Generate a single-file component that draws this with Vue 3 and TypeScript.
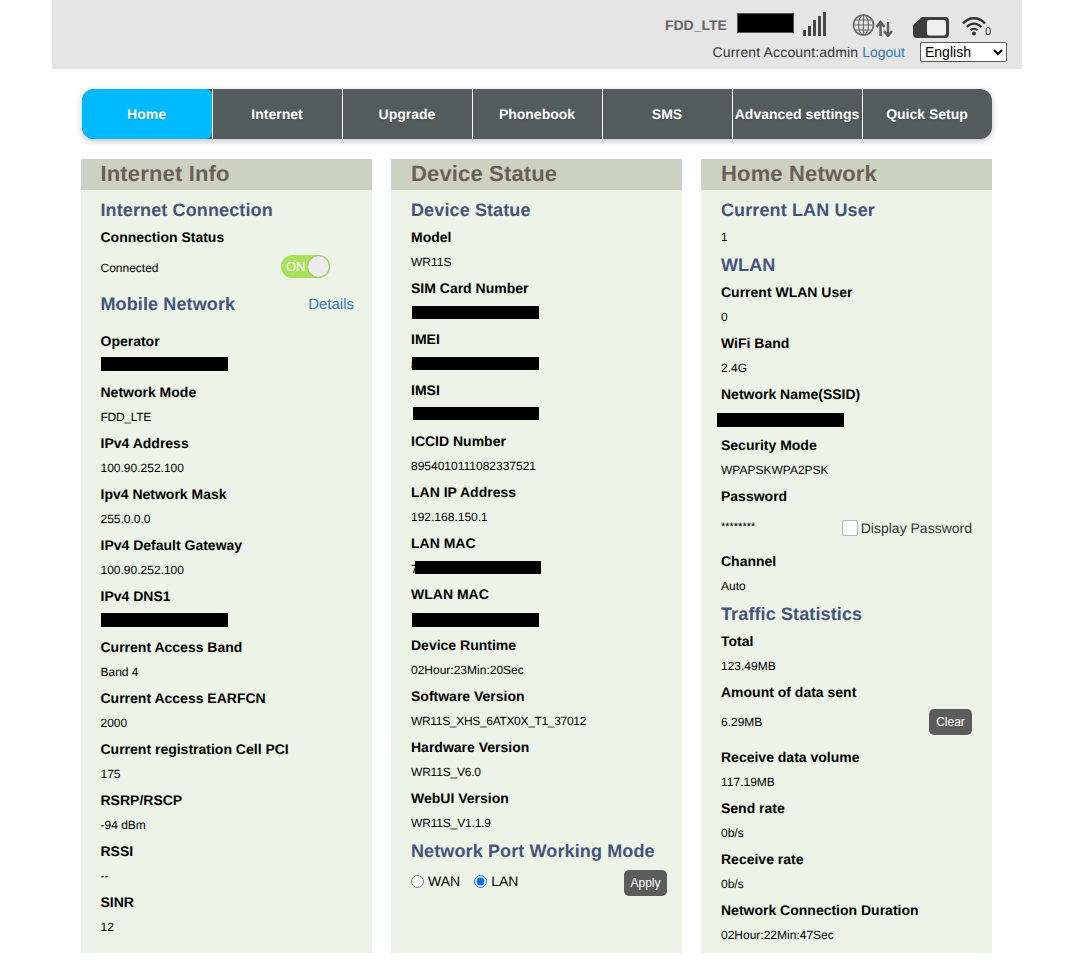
<script setup lang="ts">
type Row = {
  kind: 'h' | 'l' | 'v' | 'r'
  text?: string
  cls?: string
  w?: number
  dx?: number
  top?: number
  ht?: number
  lead?: string
}
const l = (text: string): Row => ({ kind: 'l', text })
const v = (text: string): Row => ({ kind: 'v', text })
const h = (text: string, cls = ''): Row => ({ kind: 'h', text, cls })
const r = (w: number, dx: number, top: number, ht: number, lead = ''): Row => ({ kind: 'r', w, dx, top, ht, lead })

const barStyle = (x: Row) => ({
  width: x.w + 'px',
  height: x.ht + 'px',
  marginLeft: x.dx + 'px',
  marginTop: x.top + 'px'
})

// The reference's underscore is narrower than this font's: spread the difference over the value.
const valueStyle = (x: Row) => {
  const text = x.text ?? ''
  const count = text.split('_').length - 1
  return count ? { letterSpacing: (-2 * count) / text.length + 'px' } : undefined
}

const nav = ['Home', 'Internet', 'Upgrade', 'Phonebook', 'SMS', 'Advanced settings', 'Quick Setup']

const col1b: Row[] = [
  l('Operator'), r(127, 0, 3, 14),
  l('Network Mode'), v('FDD_LTE'),
  l('IPv4 Address'), v('100.90.252.100'),
  l('Ipv4 Network Mask'), v('255.0.0.0'),
  l('IPv4 Default Gateway'), v('100.90.252.100'),
  l('IPv4 DNS1'), r(127, 0, 4, 14),
  l('Current Access Band'), v('Band 4'),
  l('Current Access EARFCN'), v('2000'),
  l('Current registration Cell PCI'), v('175'),
  l('RSRP/RSCP'), v('-94 dBm'),
  l('RSSI'), v('--'),
  l('SINR'), v('12')
]
const col2: Row[] = [
  h('Device Statue', 'first'),
  l('Model'), v('WR11S'),
  l('SIM Card Number'), r(127, 1, 5, 13),
  l('IMEI'), r(127, 1, 5, 13, '8'),
  l('IMSI'), r(126, 2, 4, 13),
  l('ICCID Number'), v('8954010111082337521'),
  l('LAN IP Address'), v('192.168.150.1'),
  l('LAN MAC'), r(126, 4, 5, 13, '7'),
  l('WLAN MAC'), r(127, 1, 6, 14),
  l('Device Runtime'), v('02Hour:23Min:20Sec'),
  l('Software Version'), v('WR11S_XHS_6ATX0X_T1_37012'),
  l('Hardware Version'), v('WR11S_V6.0'),
  l('WebUI Version'), v('WR11S_V1.1.9')
]
const col3a: Row[] = [
  h('Current LAN User', 'first'), v('1'),
  h('WLAN', 'mid'),
  l('Current WLAN User'), v('0'),
  l('WiFi Band'), v('2.4G'),
  l('Network Name(SSID)'), r(127, -4, 6, 14),
  l('Security Mode'), v('WPAPSKWPA2PSK'),
  l('Password')
]
const col3b: Row[] = [
  l('Channel'), v('Auto'),
  h('Traffic Statistics', 'mid'),
  l('Total'), v('123.49MB'),
  l('Amount of data sent')
]
const col3c: Row[] = [
  l('Receive data volume'), v('117.19MB'),
  l('Send rate'), v('0b/s'),
  l('Receive rate'), v('0b/s'),
  l('Network Connection Duration'), v('02Hour:22Min:47Sec')
]
</script>

<template>
  <div class="page">
    <header class="top">
      <div class="status">
        <span class="mode">FDD_LTE</span>
        <span class="carrier"></span>
        <svg class="signal" width="24" height="24" viewBox="0 0 24 24">
          <rect x="0" y="18" width="3" height="6" fill="#444" />
          <rect x="5" y="14" width="3" height="10" fill="#444" />
          <rect x="10" y="8" width="3" height="16" fill="#4a4a4a" />
          <rect x="15" y="4" width="3" height="20" fill="#4a4a4a" />
          <rect x="20" y="0" width="3" height="24" fill="#4a4a4a" />
        </svg>
        <svg class="globe" width="42" height="24" viewBox="0 0 42 24" fill="none" stroke="#6a6a6a">
          <circle cx="11.500" cy="12" r="10" stroke-width="1.6" />
          <ellipse cx="11.500" cy="12" rx="5" ry="10" stroke-width="1.2" />
          <path d="M11.500 2v20M1.500 12h20M3 7h17M3 17h17" stroke-width="1.2" />
          <path d="M28.500 23V10M24.500 14 28.500 9l4 5M36 9v13M32 18l4 5 4-5" stroke-width="2.400" stroke="#5e5e5e" />
        </svg>
        <svg class="sim" width="36" height="21" viewBox="0 0 36 21">
          <path d="M9 0h23a4 4 0 0 1 4 4v13a4 4 0 0 1-4 4H4a4 4 0 0 1-4-4V8z" fill="#3d3d3d" />
          <rect x="14" y="3" width="19" height="15.500" rx="2" fill="#efefef" />
        </svg>
        <svg class="wifi" width="32" height="22" viewBox="0 0 32 22" fill="none" stroke="#333">
          <path d="M1 9.500C7 2.500 17 2.500 23 9.500" stroke-width="2.300" />
          <path d="M4.800 13C9 8.500 15 8.500 19.200 13" stroke-width="2.300" />
          <path d="M8.500 16.300C10.500 14.300 13.500 14.300 15.500 16.300" stroke-width="2.300" />
          <circle cx="12" cy="19.500" r="1.900" fill="#333" stroke="none" />
        </svg>
        <span class="wifi-count">0</span>
      </div>
      <div class="account">
        <span class="who">Current Account:admin</span>
        <a class="link logout">Logout</a>
        <select class="lang"><option>English</option></select>
      </div>
    </header>

    <nav class="nav">
      <div v-for="(item, i) in nav" :key="item" class="nav-item" :class="{ active: i === 0 }">{{ item }}</div>
    </nav>

    <main class="cols">
      <section class="col">
        <h1 class="title">Internet Info</h1>
        <div class="body">
          <h2 class="first">Internet Connection</h2>
          <div class="label">Connection Status</div>
          <div class="value row conn">
            <span>Connected</span>
            <span class="switch"><span class="on">ON</span><span class="knob"></span></span>
          </div>
          <div class="mobile">
            <h2>Mobile Network</h2>
            <a class="link details">Details</a>
          </div>
          <template v-for="(x, i) in col1b" :key="i">
            <div v-if="x.kind === 'l'" class="label">{{ x.text }}</div>
            <div v-else-if="x.kind === 'v'" class="value" :style="valueStyle(x)">{{ x.text }}</div>
            <div v-else class="value redact-row"><i class="redact" :style="barStyle(x)"></i></div>
          </template>
        </div>
      </section>

      <section class="col">
        <h1 class="title">Device Statue</h1>
        <div class="body">
          <template v-for="(x, i) in col2" :key="i">
            <h2 v-if="x.kind === 'h'" :class="x.cls">{{ x.text }}</h2>
            <div v-else-if="x.kind === 'l'" class="label">{{ x.text }}</div>
            <div v-else-if="x.kind === 'v'" class="value" :style="valueStyle(x)">{{ x.text }}</div>
            <div v-else class="value redact-row">
              <span v-if="x.lead" class="lead">{{ x.lead }}</span>
              <i class="redact" :style="barStyle(x)"></i>
            </div>
          </template>
          <h2 class="port">Network Port Working Mode</h2>
          <div class="row radios">
            <label class="radio wan"><input type="radio" name="mode" />WAN</label>
            <label class="radio"><input type="radio" name="mode" checked />LAN</label>
            <button class="btn apply">Apply</button>
          </div>
        </div>
      </section>

      <section class="col">
        <h1 class="title">Home Network</h1>
        <div class="body">
          <template v-for="(x, i) in col3a" :key="'a' + i">
            <h2 v-if="x.kind === 'h'" :class="x.cls">{{ x.text }}</h2>
            <div v-else-if="x.kind === 'l'" class="label">{{ x.text }}</div>
            <div v-else-if="x.kind === 'v'" class="value">{{ x.text }}</div>
            <div v-else class="value redact-row"><i class="redact" :style="barStyle(x)"></i></div>
          </template>
          <div class="row tall">
            <span class="value-text stars">********</span>
            <label class="check"><input type="checkbox" />Display Password</label>
          </div>
          <template v-for="(x, i) in col3b" :key="'b' + i">
            <h2 v-if="x.kind === 'h'" :class="x.cls">{{ x.text }}</h2>
            <div v-else-if="x.kind === 'l'" class="label">{{ x.text }}</div>
            <div v-else class="value">{{ x.text }}</div>
          </template>
          <div class="row tall">
            <span class="value-text sent">6.29MB</span>
            <button class="btn clear">Clear</button>
          </div>
          <template v-for="(x, i) in col3c" :key="'c' + i">
            <div v-if="x.kind === 'l'" class="label">{{ x.text }}</div>
            <div v-else class="value">{{ x.text }}</div>
          </template>
        </div>
      </section>
    </main>
  </div>
</template>

<style>
html, body { background: #fff; }
</style>

<style scoped>
.page {
  width: 1072px;
  height: 977px;
  overflow: hidden;
  font-family: "Liberation Sans", Arial, sans-serif;
  color: #000;
  text-rendering: geometricPrecision;
}
.top {
  box-sizing: border-box;
  width: 970px;
  height: 69px;
  margin-left: 52px;
  background: #e5e5e5;
  padding: 12px 15px 0 0;
}
.status {
  display: flex;
  align-items: center;
  justify-content: flex-end;
  height: 26px;
  padding-right: 16px;
}
.mode {
  font-size: 14px;
  font-weight: bold;
  color: #666;
  margin-right: 10px;
}
.carrier {
  width: 57px;
  height: 20px;
  box-sizing: border-box;
  background: #000;
  border: 1px solid #555;
  margin: -5px 9px 0 0;
}
.signal { margin: -2px 25px 0 0; }
.globe { margin-right: 19px; }
.sim { margin: 5px 13px 0 0; }
.wifi-count {
  font-size: 11px;
  margin: 13px 0 0 -9px;
  color: #333;
}
.account {
  display: flex;
  align-items: center;
  justify-content: flex-end;
  height: 22px;
  margin-top: 3px;
  font-size: 14px;
  color: #333;
}
.who { letter-spacing: .15px; }
.link { color: #337ab7; }
.logout { margin-left: 4px; }
.lang {
  width: 87px;
  height: 20px;
  margin-left: 15px;
  font: 14px "Liberation Sans", Arial, sans-serif;
  background: #fff;
  color: #000;
  border: 1px solid #555;
  border-radius: 2px;
}
.nav {
  display: flex;
  width: 910px;
  height: 50px;
  margin: 20px 0 0 82px;
  border-radius: 12px;
  background: #525c5c;
  box-shadow: 0 2px 6px rgba(0, 0, 0, .25);
}
.nav-item {
  box-sizing: border-box;
  flex: 0 0 130px;
  display: flex;
  align-items: center;
  justify-content: center;
  border-left: 1px solid #fff;
  padding-right: 1px;
  color: #fff;
  font-size: 14px;
  font-weight: bold;
  white-space: nowrap;
  text-shadow: 0 1px 1px rgba(0, 0, 0, .2);
}
.nav-item.active {
  border-left: 0;
  background: #00baff;
  border-radius: 12px 6px 6px 12px;
}
.cols {
  display: flex;
  gap: 19px;
  margin: 20px 0 0 81px;
}
.col {
  width: 291px;
  height: 794px;
  background: #edf3e6;
}
.title {
  margin: 0;
  height: 31px;
  line-height: 30px;
  padding-left: 20px;
  background: #cdd1c2;
  color: #6b5f59;
  font-size: 22px;
  font-weight: bold;
  letter-spacing: .15px;
}
.body { padding: 0 20px; }
.col:first-child .title { padding-left: 19.5px; }
.col:first-child .body { padding-left: 19.5px; }
h2 {
  margin: 0;
  color: #45547c;
  font-size: 18px;
  font-weight: bold;
  line-height: 29px;
  height: 29px;
  letter-spacing: .12px;
}
h2.first { padding-top: 6px; }
.label {
  height: 25px;
  line-height: 25px;
  font-size: 14px;
  font-weight: bold;
}
.value {
  height: 26px;
  line-height: 25px;
  font-size: 12px;
}
.redact-row {
  display: flex;
  align-items: flex-start;
}
.redact {
  display: block;
  flex: none;
  background: #000;
}
.lead {
  width: 0;
  line-height: 26px;
  overflow: visible;
}
.row {
  display: flex;
  align-items: center;
  justify-content: space-between;
}
.conn {
  height: 36px;
  padding-right: 22px;
  line-height: 37px;
}
.conn > span:first-child { margin-top: 1px; }
.switch {
  box-sizing: border-box;
  display: flex;
  align-items: center;
  justify-content: space-between;
  width: 49px;
  height: 23px;
  padding: 0 1px 0 5px;
  margin-top: -3px;
  border-radius: 12px;
  background: #a9e05c;
  line-height: 23px;
}
.on { color: #fff; font-size: 13px; }
.knob {
  width: 21px;
  height: 21px;
  border-radius: 50%;
  background: #ececec;
  box-shadow: 0 0 2px rgba(0, 0, 0, .3);
}
.mobile {
  display: flex;
  align-items: flex-start;
  justify-content: space-between;
  height: 43px;
  padding-top: 4px;
  box-sizing: border-box;
}
.details {
  font-size: 15px;
  line-height: 30px;
  margin-right: -2px;
}
.port { height: 33px; line-height: 28px; }
.radios {
  height: 26px;
  justify-content: flex-start;
  margin-right: -5px;
}
.radio {
  display: flex;
  align-items: center;
  font-size: 14px;
  line-height: 16px;
  margin-top: -4px;
}
.radio input {
  width: 13px;
  height: 13px;
  margin: 0 4px 0 0;
  accent-color: #0a6cf5;
}
.wan { margin-right: 14px; }
.btn {
  border: 0;
  border-radius: 5px;
  background: #5c5c5c;
  color: #fff;
  font: 12px "Liberation Sans", Arial, sans-serif;
  width: 43px;
  height: 26px;
  padding: 0;
}
.apply { margin-left: auto; }
.tall { height: 40px; }
.value-text { font-size: 12px; }
.stars { margin-top: -4px; font-size: 11px; }
.sent { margin-top: -6px; }
.check {
  display: flex;
  align-items: center;
  font-size: 14px;
  color: #333;
  margin-top: -3px;
}
.check input {
  appearance: none;
  box-sizing: border-box;
  width: 16px;
  height: 16px;
  margin: 0 3px 0 0;
  background: #fff;
  border: 1px solid #b5b5b5;
  border-radius: 2px;
}
.clear { margin-top: -6px; }
</style>
